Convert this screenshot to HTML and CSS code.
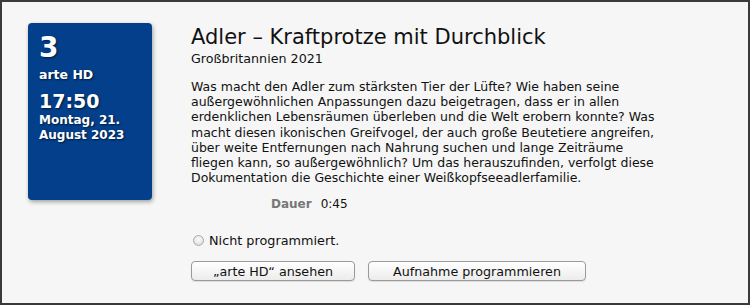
FILE: index.html
```html
<!DOCTYPE html>
<html lang="de">
<head>
    <meta charset="UTF-8">
    <title>Sendung</title>
    <link rel="stylesheet" href="styles.css">
</head>
<body>
    <div class="window">
        <div class="channel-card">
            <div class="channel-number">3</div>
            <div class="channel-name">arte HD</div>
            <div class="start-time">17:50</div>
            <div class="start-date">Montag, 21.<br>August 2023</div>
        </div>
        <div class="details">
            <h1 class="title">Adler – Kraftprotze mit Durchblick</h1>
            <div class="origin">Großbritannien 2021</div>
            <p class="description">Was macht den Adler zum stärksten Tier der Lüfte? Wie haben seine<br>
                außergewöhnlichen Anpassungen dazu beigetragen, dass er in allen<br>
                erdenklichen Lebensräumen überleben und die Welt erobern konnte? Was<br>
                macht diesen ikonischen Greifvogel, der auch große Beutetiere angreifen,<br>
                über weite Entfernungen nach Nahrung suchen und lange Zeiträume<br>
                fliegen kann, so außergewöhnlich? Um das herauszufinden, verfolgt diese<br>
                Dokumentation die Geschichte einer Weißkopfseeadlerfamilie.</p>
            <div class="duration">
                <span class="label">Dauer</span>
                <span class="value">0:45</span>
            </div>
            <div class="status">
                <span class="radio"></span>
                <span>Nicht programmiert.</span>
            </div>
            <div class="buttons">
                <button class="btn btn-watch">„arte HD“ ansehen</button>
                <button class="btn btn-record">Aufnahme programmieren</button>
            </div>
        </div>
    </div>
</body>
</html>
```

FILE: styles.css
```css
body {
    margin: 0;
    font-family: "DejaVu Sans", Verdana, sans-serif;
    color: #111;
}

.window {
    width: 750px;
    height: 305px;
    box-sizing: border-box;
    border: 2px solid #3a3a3a;
    background-color: #f6f6f6;
    display: flex;
    align-items: flex-start;
    padding: 21px 0 0 26px;
}

.channel-card {
    width: 124px;
    height: 177px;
    box-sizing: border-box;
    padding: 9px 0 0 11px;
    background-color: #043f8b;
    border-radius: 4px;
    box-shadow: 1px 2px 4px rgba(0, 0, 0, 0.35);
    color: #ffffff;
    font-weight: bold;
    text-shadow: 1px 1px 2px rgba(0, 0, 0, 0.6);
    flex-shrink: 0;
}

.channel-number {
    font-size: 28px;
    line-height: 32px;
}

.channel-name {
    font-size: 12.5px;
    line-height: 16px;
    margin-top: 3px;
}

.start-time {
    font-size: 19px;
    line-height: 22px;
    margin-top: 7px;
}

.start-date {
    font-size: 12px;
    line-height: 15px;
    margin-top: 1px;
}

.details {
    margin-left: 39px;
    width: 510px;
}

.title {
    margin: 0;
    font-weight: normal;
    font-size: 21px;
    line-height: 26px;
    margin-top: 1px;
}

.origin {
    font-size: 12.7px;
    line-height: 15px;
    margin-top: 1px;
}

.description {
    font-size: 12.5px;
    line-height: 15.2px;
    margin: 13px 0 0;
    white-space: nowrap;
}

.duration {
    font-size: 12px;
    margin: 12px 0 0 80px;
    display: flex;
    gap: 9px;
}

.duration .label {
    color: #777;
    font-weight: bold;
}

.status {
    font-size: 12.8px;
    display: flex;
    align-items: center;
    gap: 5px;
    margin: 22px 0 0 2px;
}

.radio {
    width: 11px;
    height: 11px;
    border-radius: 50%;
    border: 1px solid #aaa;
    background: radial-gradient(circle at 50% 40%, #ffffff, #d4d4d4);
    box-sizing: border-box;
}

.buttons {
    display: flex;
    gap: 13px;
    margin-top: 13px;
}

.btn {
    font-family: "DejaVu Sans", Verdana, sans-serif;
    font-size: 12.7px;
    height: 20px;
    padding: 0;
    border: 1px solid #9a9a9a;
    border-radius: 4px;
    background: linear-gradient(#ffffff, #ececec);
    color: #111;
    box-shadow: 0 1px 1px rgba(0, 0, 0, 0.1);
}

.btn-watch {
    width: 164px;
}

.btn-record {
    width: 218px;
}
```
